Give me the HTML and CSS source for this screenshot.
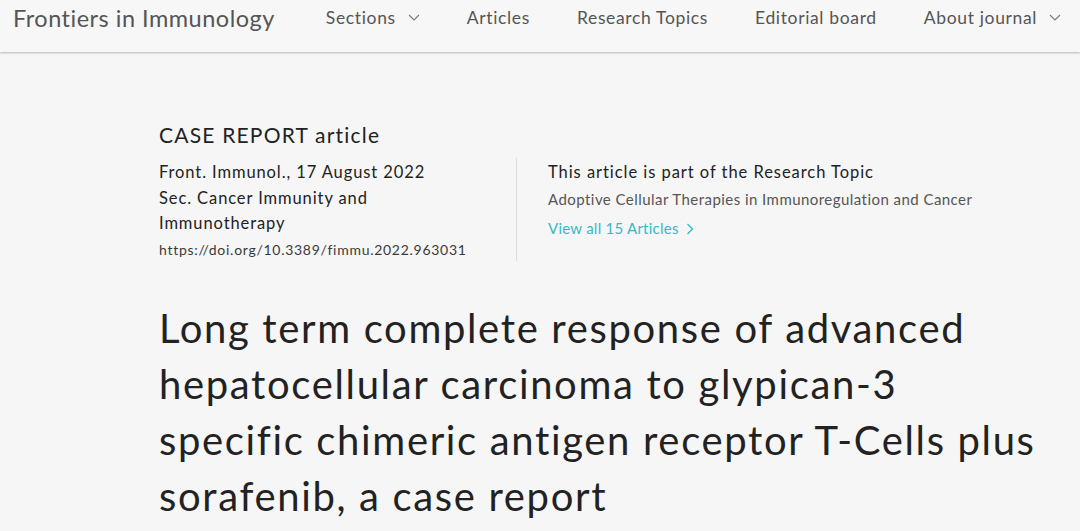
FILE: index.html
```html
<!DOCTYPE html>
<html lang="en">
<head>
<meta charset="utf-8">
<title>Frontiers in Immunology</title>
<link rel="stylesheet" href="styles.css">
</head>
<body>
<header class="topbar">
  <div class="brand">Frontiers in Immunology</div>
  <nav class="nav">
    <span class="nav-item">Sections <svg class="chev" width="12" height="7" viewBox="0 0 12 7"><path d="M1 1 6 6 11 1" fill="none" stroke="#777" stroke-width="1.1"/></svg></span>
    <span class="nav-item">Articles</span>
    <span class="nav-item">Research Topics</span>
    <span class="nav-item">Editorial board</span>
    <span class="nav-item">About journal <svg class="chev" width="12" height="7" viewBox="0 0 12 7"><path d="M1 1 6 6 11 1" fill="none" stroke="#777" stroke-width="1.1"/></svg></span>
  </nav>
</header>
<main class="content">
  <div class="type">CASE REPORT article</div>
  <div class="meta">
    <div class="meta-left">
      <div class="meta-line">Front. Immunol., 17 August 2022</div>
      <div class="meta-line">Sec. Cancer Immunity and<br>Immunotherapy</div>
      <div class="doi">https://doi.org/10.3389/fimmu.2022.963031</div>
    </div>
    <div class="meta-right">
      <div class="rt-head">This article is part of the Research Topic</div>
      <div class="rt-name">Adoptive Cellular Therapies in Immunoregulation and Cancer</div>
      <div class="rt-link">View all 15 Articles <svg width="8" height="12" viewBox="0 0 8 12"><path d="M1.5 1 6.5 6 1.5 11" fill="none" stroke="#3ab7c8" stroke-width="1.4"/></svg></div>
    </div>
  </div>
  <h1 class="title">Long term complete response of advanced hepatocellular carcinoma to glypican-3 specific chimeric antigen receptor T-Cells plus sorafenib, a case report</h1>
</main>
</body>
</html>
```
FILE: styles.css
```css
* { box-sizing: border-box; }
html, body { margin: 0; padding: 0; }
body {
  background: #f6f6f6;
  font-family: Lato, "Open Sans", sans-serif;
  color: #222;
  overflow: hidden;
  height: 531px;
}
.topbar {
  height: 52px;
  background: #f7f7f7;
  display: flex;
  align-items: flex-start;
  padding: 4px 0 0 13px;
  box-shadow: 0 1px 2px rgba(0,0,0,0.25);
  position: relative;
  white-space: nowrap;
  overflow: hidden;
}
.brand {
  flex-shrink: 0;
  font-size: 23.5px;
  letter-spacing: 0.5px;
  color: #555;
  line-height: 28px;
  margin-right: 51px;
}
.nav { display: flex; flex-shrink: 0; }
.nav-item {
  flex-shrink: 0;
  font-size: 17.5px;
  letter-spacing: 0.65px;
  color: #555;
  line-height: 28px;
  margin-right: 47px;
  display: flex;
  align-items: center;
  gap: 12px;
}
.chev { margin-top: -2px; }
.content {
  padding: 70px 0 0 159px;
  width: 1040px;
}
.type {
  font-size: 21px;
  letter-spacing: 1.2px;
  line-height: 26px;
  color: #222;
  margin-bottom: 12px;
}
.meta { display: flex; }
.meta-left { width: 357px; }
.meta-line { font-size: 16.5px; letter-spacing: 0.9px; line-height: 25.5px; color: #222; }
.doi { font-size: 14px; letter-spacing: 0.72px; line-height: 26px; color: #3a3a3a; }
.meta-right {
  border-left: 1px solid #ddd;
  padding-left: 31px;
  margin-top: -2px;
  padding-top: 1px;
  height: 103px;
}
.rt-head { font-size: 16.5px; letter-spacing: 0.95px; line-height: 26px; color: #222; }
.rt-name { font-size: 15px; letter-spacing: 0.45px; line-height: 29px; color: #555; }
.rt-link { font-size: 15px; letter-spacing: 0.25px; line-height: 29px; color: #3ab7c8; display: flex; align-items: center; gap: 7px; }
.title {
  font-weight: normal;
  font-size: 40px;
  letter-spacing: 1.65px;
  line-height: 56px;
  margin: 37px 0 0;
  color: #222;
}
```
